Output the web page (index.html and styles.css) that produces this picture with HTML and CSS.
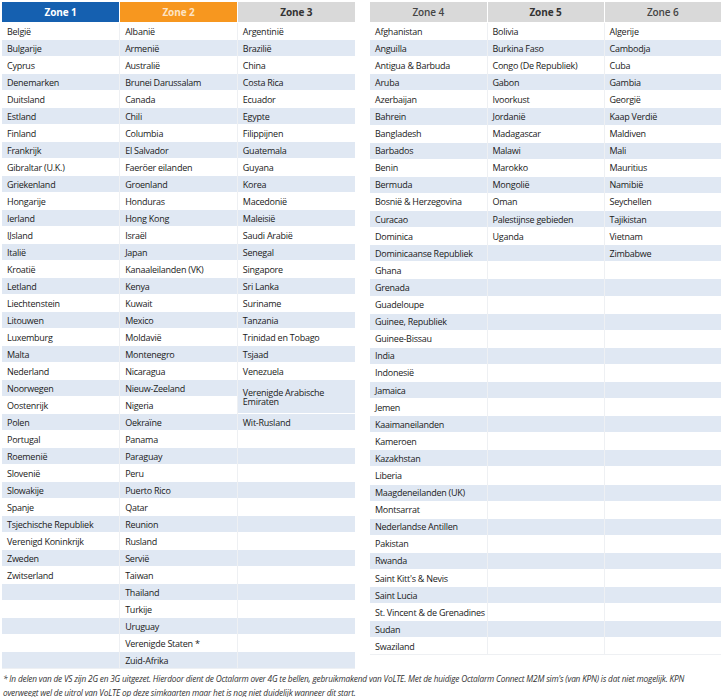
FILE: index.html
```html
<!DOCTYPE html>
<html lang="nl">
<head>
<meta charset="utf-8">
<link rel="stylesheet" href="styles.css">
</head>
<body>
<div class="page">
  <div class="tables">
    <table class="zones left">
      <colgroup><col><col><col></colgroup>
      <thead>
        <tr><th class="z1">Zone 1</th><th class="z2">Zone 2</th><th class="z3">Zone 3</th></tr>
      </thead>
      <tbody id="leftBody"></tbody>
    </table>
    <table class="zones right">
      <colgroup><col><col><col></colgroup>
      <thead>
        <tr><th class="z3 light">Zone 4</th><th class="z3">Zone 5</th><th class="z3 light">Zone 6</th></tr>
      </thead>
      <tbody id="rightBody"></tbody>
    </table>
  </div>
  <p class="note">* In delen van de VS zijn 2G en 3G uitgezet. Hierdoor dient de Octalarm over 4G te bellen, gebruikmakend van VoLTE. Met de huidige Octalarm Connect M2M sim's (van KPN) is dat niet mogelijk. KPN overweegt wel de uitrol van VoLTE op deze simkaarten maar het is nog niet duidelijk wanneer dit start.</p>
</div>
<script src="app.js"></script>
</body>
</html>
```
FILE: app.js
```js
var z1 = ["België","Bulgarije","Cyprus","Denemarken","Duitsland","Estland","Finland","Frankrijk","Gibraltar (U.K.)","Griekenland","Hongarije","Ierland","IJsland","Italië","Kroatië","Letland","Liechtenstein","Litouwen","Luxemburg","Malta","Nederland","Noorwegen","Oostenrijk","Polen","Portugal","Roemenië","Slovenië","Slowakije","Spanje","Tsjechische Republiek","Verenigd Koninkrijk","Zweden","Zwitserland"];
var z2 = ["Albanië","Armenië","Australië","Brunei Darussalam","Canada","Chili","Columbia","El Salvador","Faeröer eilanden","Groenland","Honduras","Hong Kong","Israël","Japan","Kanaaleilanden (VK)","Kenya","Kuwait","Mexico","Moldavië","Montenegro","Nicaragua","Nieuw-Zeeland","Nigeria","Oekraïne","Panama","Paraguay","Peru","Puerto Rico","Qatar","Reunion","Rusland","Servië","Taiwan","Thailand","Turkije","Uruguay","Verenigde Staten *","Zuid-Afrika"];
var z3 = ["Argentinië","Brazilië","China","Costa Rica","Ecuador","Egypte","Filippijnen","Guatemala","Guyana","Korea","Macedonië","Maleisië","Saudi Arabië","Senegal","Singapore","Sri Lanka","Suriname","Tanzania","Trinidad en Tobago","Tsjaad","Venezuela","Verenigde Arabische Emiraten","Wit-Rusland"];
var z4 = ["Afghanistan","Anguilla","Antigua & Barbuda","Aruba","Azerbaijan","Bahrein","Bangladesh","Barbados","Benin","Bermuda","Bosnië & Herzegovina","Curacao","Dominica","Dominicaanse Republiek","Ghana","Grenada","Guadeloupe","Guinee, Republiek","Guinee-Bissau","India","Indonesië","Jamaica","Jemen","Kaaimaneilanden","Kameroen","Kazakhstan","Liberia","Maagdeneilanden (UK)","Montsarrat","Nederlandse Antillen","Pakistan","Rwanda","Saint Kitt's & Nevis","Saint Lucia","St. Vincent & de Grenadines","Sudan","Swaziland"];
var z5 = ["Bolivia","Burkina Faso","Congo (De Republiek)","Gabon","Ivoorkust","Jordanië","Madagascar","Malawi","Marokko","Mongolië","Oman","Palestijnse gebieden","Uganda"];
var z6 = ["Algerije","Cambodja","Cuba","Gambia","Georgië","Kaap Verdië","Maldiven","Mali","Mauritius","Namibië","Seychellen","Tajikistan","Vietnam","Zimbabwe"];

function td(text) {
  var c = document.createElement("td");
  c.textContent = text || "";
  return c;
}

var lb = document.getElementById("leftBody");
var k3 = 0;
for (var i = 0; i < z2.length; i++) {
  var tr = document.createElement("tr");
  tr.className = i % 2 ? "alt" : "";
  tr.appendChild(td(z1[i]));
  tr.appendChild(td(z2[i]));
  if (i === 21) {
    var c = td(z3[k3++]);
    c.rowSpan = 2;
    c.className = "span";
    tr.appendChild(c);
  } else if (i !== 22) {
    tr.appendChild(td(z3[k3++]));
  }
  lb.appendChild(tr);
}

var rb = document.getElementById("rightBody");
for (var j = 0; j < z4.length; j++) {
  var r = document.createElement("tr");
  r.className = j % 2 ? "alt" : "";
  r.appendChild(td(z4[j]));
  r.appendChild(td(z5[j]));
  r.appendChild(td(z6[j]));
  rb.appendChild(r);
}
```
FILE: styles.css
```css
html, body {
  margin: 0;
  padding: 0;
  background: #ffffff;
}
body {
  font-family: "Open Sans", "Liberation Sans", sans-serif;
  color: #1a1a1a;
}
.page {
  padding: 2px 2px 0 2px;
}
.tables {
  display: flex;
  gap: 15px;
  align-items: flex-start;
}
.zones {
  border-collapse: collapse;
  table-layout: fixed;
  width: 353px;
}
.zones.right {
  width: 351px;
}
.zones th {
  height: 20px;
  padding: 0;
  font-size: 10px;
  font-weight: 700;
  text-align: center;
  letter-spacing: -0.1px;
  border-left: 1px solid #ffffff;
}
.zones th:first-child {
  border-left: none;
}
.z1 {
  background: #1560b0;
  color: #ffffff;
}
.z2 {
  background: #f7971f;
  color: #fde3c4;
}
.z3 {
  background: #d9d9d9;
  color: #333333;
}
.z3.light {
  font-weight: 600;
  color: #444;
}
.zones td {
  height: 17px;
  padding: 0 0 0 5px;
  font-size: 9px;
  letter-spacing: -0.25px;
  line-height: 9px;
  vertical-align: middle;
  white-space: nowrap;
  overflow: hidden;
  border-left: 1px solid #eef0f3;
  border-top: 1px solid #ffffff;
  box-sizing: border-box;
}
.zones.right td {
  height: 17.1px;
}
.zones td:first-child {
  border-left: none;
}
.zones tr.alt td {
  background: #e0e8f3;
}
.zones td.span {
  background: #e0e8f3;
  white-space: normal;
}
.zones tbody tr:last-child td {
  border-bottom: 1px solid #eef0f3;
}
.note {
  margin: 3px 0 0 1px;
  font-size: 8.3px;
  font-style: italic;
  line-height: 14px;
  color: #333;
  letter-spacing: -0.2px;
}
```
